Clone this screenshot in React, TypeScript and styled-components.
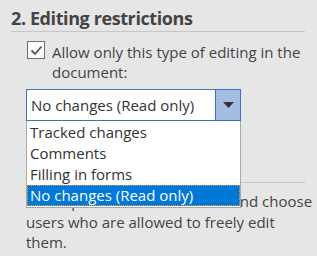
import React from 'react'
import styled, { createGlobalStyle } from 'styled-components'

const GlobalStyle = createGlobalStyle`
  html, body {
    margin: 0;
    padding: 0;
    background: #e6e6e6;
  }
  body {
    font-family: "Open Sans", "Noto Sans", sans-serif;
    color: #444;
  }
`

const Pane = styled.div`
  width: 317px;
  height: 256px;
  overflow: hidden;
  padding: 6px 12px 0 11px;
  box-sizing: border-box;
`

const Heading = styled.h2`
  margin: 0;
  font-size: 18px;
  letter-spacing: -0.4px;
  font-weight: 700;
  color: #444;
  line-height: 24px;
  padding-bottom: 1px;
  border-bottom: 1px solid #c6c6c6;
`

const Section = styled.div`
  padding-left: 15px;
`

const CheckRow = styled.label`
  display: flex;
  align-items: flex-start;
  gap: 7px;
  margin-top: 10px;
  padding-left: 1px;
  font-size: 15px;
  line-height: 20px;
  color: #444;
`

const Box = styled.span`
  flex: none;
  width: 16px;
  height: 16px;
  border: 1px solid #707070;
  background: #fafafa;
  margin-top: -1px;
  display: flex;
  align-items: center;
  justify-content: center;
`

const ComboWrap = styled.div`
  position: relative;
  margin-top: 7px;
  width: 215px;
`

const Combo = styled.div`
  display: flex;
  height: 32px;
  box-sizing: border-box;
  border: 1px solid #3e72c0;
  background: #fff;
`

const ComboText = styled.div`
  flex: 1;
  padding-left: 4px;
  font-size: 15px;
  line-height: 30px;
  color: #333;
`

const ArrowButton = styled.div`
  width: 24px;
  border-left: 1px solid #3e72c0;
  background: #a4bee3;
  display: flex;
  align-items: center;
  justify-content: center;
`

const List = styled.ul`
  position: absolute;
  left: 0;
  top: 32px;
  width: 215px;
  box-sizing: border-box;
  margin: 0;
  padding: 1px 0 1px;
  list-style: none;
  background: #fff;
  border: 1px solid #a8a8a8;
  border-top: none;
  z-index: 2;
`

const Item = styled.li<{ $selected?: boolean }>`
  height: 21px;
  padding-left: 3px;
  font-size: 15px;
  line-height: 21px;
  white-space: nowrap;
  color: ${p => (p.$selected ? '#fff' : '#333')};
  background: ${p => (p.$selected ? '#0078d7' : 'transparent')};
  outline: ${p => (p.$selected ? '1px dotted #f29a3c' : 'none')};
  outline-offset: -1px;
`

const Rule = styled.div`
  margin-top: 61px;
  border-top: 1px solid #c6c6c6;
`

const Exceptions = styled.p`
  margin: 8px -10px 0 0;
  font-size: 15px;
  line-height: 20.5px;
  color: #444;
`

const items = ['Tracked changes', 'Comments', 'Filling in forms', 'No changes (Read only)']

export default function App() {
  return (
    <>
      <GlobalStyle />
      <Pane>
        <Heading>2. Editing restrictions</Heading>
        <Section>
          <CheckRow>
            <Box>
              <svg width="13" height="11" viewBox="0 0 13 11">
                <path d="M1.5 5.5 L5 9 L11.5 1.5" fill="none" stroke="#555" strokeWidth="1.8" />
              </svg>
            </Box>
            <span>Allow only this type of editing in the document:</span>
          </CheckRow>
          <ComboWrap>
            <Combo>
              <ComboText>No changes (Read only)</ComboText>
              <ArrowButton>
                <svg width="11" height="6" viewBox="0 0 11 6">
                  <path d="M0 0 H11 L5.5 6 Z" fill="#333" />
                </svg>
              </ArrowButton>
            </Combo>
            <List>
              {items.map((t, i) => (
                <Item key={t} $selected={i === items.length - 1}>{t}</Item>
              ))}
            </List>
          </ComboWrap>
          <Rule />
          <Exceptions>
            Select parts of the document and choose users who are allowed to freely edit them.
          </Exceptions>
        </Section>
      </Pane>
    </>
  )
}
